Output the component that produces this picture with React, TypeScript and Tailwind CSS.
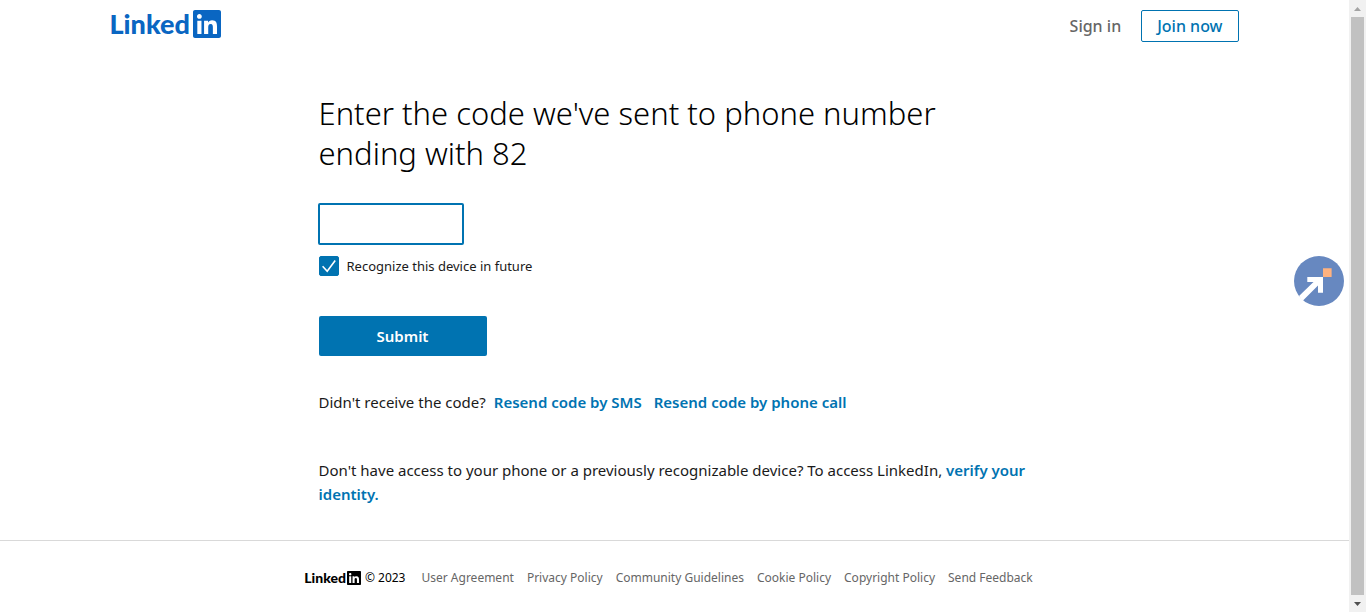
import { useState } from 'react';
import { FaLinkedin } from 'react-icons/fa';

const footerLinks = [
  'User Agreement',
  'Privacy Policy',
  'Community Guidelines',
  'Cookie Policy',
  'Copyright Policy',
  'Send Feedback',
];

const linkClass = 'font-semibold text-[#0073b1] hover:underline';

function Scrollbar() {
  return (
    <div aria-hidden="true" className="sticky top-0 flex h-screen w-[17px] shrink-0 flex-col items-center bg-[#f1f1f1]">
      <svg viewBox="0 0 17 17" className="size-[17px] shrink-0">
        <path d="M5 11h7L8.500 7z" fill="#a3a3a3" />
      </svg>
      <div className="w-[13px] flex-1 bg-[#c1c1c1]" />
      <svg viewBox="0 0 17 17" className="size-[17px] shrink-0">
        <path d="M5 7h7L8.500 11z" fill="#505050" />
      </svg>
    </div>
  );
}

function Header() {
  return (
    <header className="mx-auto flex h-13 w-full max-w-[1128px] items-center justify-between">
      <a href="#home" aria-label="LinkedIn" className="-ml-px flex items-center gap-[3px] pb-1 font-[Lato,sans-serif] text-[27px] leading-8 font-black text-[#0a66c2]">
        <span>Linked</span>
        <FaLinkedin className="h-8 w-7" />
      </a>
      <nav className="flex items-center gap-5 text-base leading-5 font-medium">
        <a href="#signin" className="text-[#666666]">Sign in</a>
        <a href="#join" className="rounded-xs border border-[#0073b1] px-[15px] py-[5px] text-[#0073b1]">Join now</a>
      </nav>
    </header>
  );
}

function CodeForm() {
  const [remember, setRemember] = useState(true);
  return (
    <form className="flex flex-col items-start" onSubmit={(e) => e.preventDefault()}>
      <input
        type="text"
        inputMode="numeric"
        aria-label="Verification code"
        className="mt-[30px] h-[42px] w-[146px] -ml-px rounded-xs border-2 border-[#0073b1] px-3 text-base outline-none"
      />
      <label className="mt-[11px] flex items-center gap-2 text-[13px] leading-5">
        <span className="relative flex size-5">
          <input
            type="checkbox"
            checked={remember}
            onChange={(e) => setRemember(e.target.checked)}
            className="size-5 appearance-none rounded-xs border border-[#0073b1] checked:bg-[#0073b1]"
          />
          <svg viewBox="0 0 20 20" className="pointer-events-none absolute inset-0 size-5" fill="none" stroke="#fff" strokeWidth="1.6">
            {remember && <path d="M3.600 10.300l4.600 5L16.200 4.600" />}
          </svg>
        </span>
        Recognize this device in future
      </label>
      <button type="submit" className="mt-10 h-10 w-[168px] rounded-xs bg-[#0073b1] text-[15px] font-semibold text-white">
        Submit
      </button>
    </form>
  );
}

function HelperBadge() {
  return (
    <button type="button" aria-label="Open helper" className="fixed top-64 right-[22px] size-[50px]">
      <svg viewBox="0 0 50 50" className="size-full">
        <circle cx="25" cy="25" r="25" fill="#6788c0" />
        <path d="M13.300 21H29V36.800H24V29.500L9 44.500Q6.500 43 5 40L19.500 26H13.300Z" fill="#fff" />
        <path d="M29 12.300h8.600v8.700h-8.600z" fill="#ffb27f" />
      </svg>
    </button>
  );
}

export default function App() {
  return (
    <div className="flex min-h-screen bg-white font-['Noto_Sans','Open_Sans',sans-serif] text-[#1a1a1a]">
      <div className="flex min-w-0 flex-1 flex-col">
        <Header />
        <main className="mx-auto w-full max-w-[712px] pt-[41px] pb-[34px] text-[15px] leading-6">
          <h1 className="max-w-[640px] text-[31px] leading-10 font-light text-black">
            Enter the code we've sent to phone number ending with 82
          </h1>
          <CodeForm />
          <p className="mt-[34px]">
            Didn't receive the code?
            <a href="#sms" className={`ml-2 ${linkClass}`}>Resend code by SMS</a>
            <a href="#call" className={`ml-3 ${linkClass}`}>Resend code by phone call</a>
          </p>
          <p className="mt-11">
            Don't have access to your phone or a previously recognizable device? To access LinkedIn,{' '}
            <a href="#verify" className={linkClass}>verify your identity.</a>
          </p>
        </main>
        <footer className="flex flex-1 items-start justify-center border-t border-[#d9d9d9] pt-[29px] pr-3 text-xs leading-4">
          <div className="flex items-center gap-1 text-black">
            <span className="flex items-center gap-px font-[Lato,sans-serif] text-sm leading-4 font-black">
              Linked
              <FaLinkedin className="h-4 w-3.5" aria-hidden="true" />
            </span>
            <span>© 2023</span>
          </div>
          <ul className="ml-4 flex gap-[13px] text-[#666666]">
            {footerLinks.map((label) => (
              <li key={label}>
                <a href="#footer" className="hover:underline">{label}</a>
              </li>
            ))}
          </ul>
        </footer>
        <HelperBadge />
      </div>
      <Scrollbar />
    </div>
  );
}
